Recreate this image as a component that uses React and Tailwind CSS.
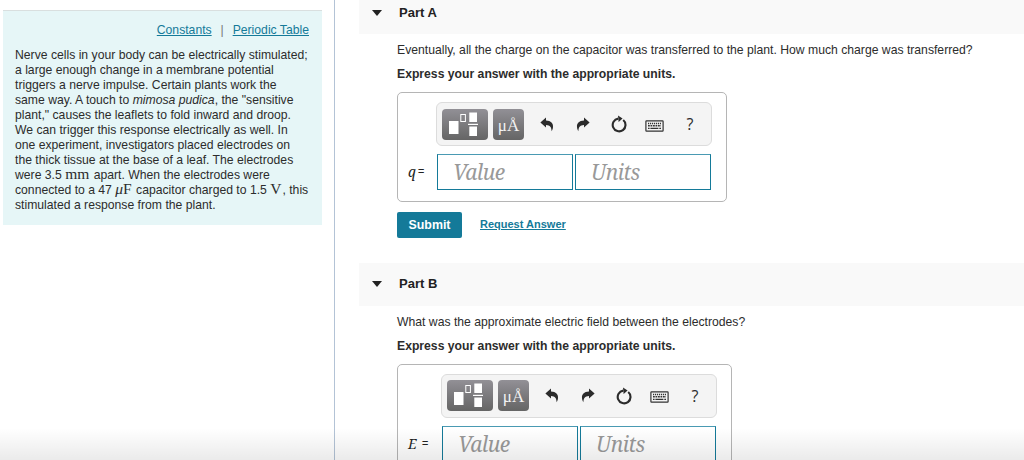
const INTRO_LINES = [
  'Nerve cells in your body can be electrically stimulated;',
  'a large enough change in a membrane potential',
  'triggers a nerve impulse. Certain plants work the',
  <>same way. A touch to <i>mimosa pudica</i>, the "sensitive</>,
  'plant," causes the leaflets to fold inward and droop.',
  'We can trigger this response electrically as well. In',
  'one experiment, investigators placed electrodes on',
  'the thick tissue at the base of a leaf. The electrodes',
  <>were 3.5 <Unit>mm</Unit> apart. When the electrodes were</>,
  <>connected to a 47 <Unit><i>μ</i>F</Unit> capacitor charged to 1.5 <Unit>V</Unit>, this</>,
  'stimulated a response from the plant.'
]

function Unit({ children }) {
  return <span className="mr-[1px] font-['Liberation_Serif',serif] text-[15.5px] leading-[0]">{children}</span>
}

function Sidebar() {
  return (
    <aside className="w-[335px] shrink-0 border-r border-[#b3c3d6] pl-[3px] pt-[10px]">
      <div className="h-[215px] w-[319px] border-t border-[#d9dfdf] bg-[#e6f6f7] pl-3 pt-[12px]">
        <div className="flex h-[15px] w-[294px] justify-end text-[12.2px] leading-[15px] text-[#147a99]">
          <a href="#" className="underline">Constants</a>
          <span className="w-[21px] text-center text-[#777]">|</span>
          <a href="#" className="underline">Periodic Table</a>
        </div>
        <div className="mt-[10px] text-[12.2px] leading-[15px] text-[#2c2c2c]">
          {INTRO_LINES.map((line, i) => (
            <p key={i} className="h-[15px] whitespace-nowrap">{line}</p>
          ))}
        </div>
      </div>
    </aside>
  )
}

function TemplateIcon() {
  return (
    <svg width="46" height="31" viewBox="0 0 46 31" fill="#fff">
      <rect x="7" y="12" width="9.5" height="13" />
      <rect x="18.8" y="5.5" width="4.6" height="7" fill="none" stroke="#fff" strokeWidth="1" />
      <rect x="27.3" y="3.5" width="7.7" height="9.5" />
      <rect x="26" y="14.8" width="10" height="1.2" />
      <rect x="27.3" y="17.5" width="7.7" height="9.5" />
    </svg>
  )
}

function UndoIcon() {
  return (
    <svg width="14" height="15" viewBox="0 0 14 15" fill="#2b2b2b">
      <path d="M0.4 5.4 L6 0.6 V3.4 C11 3.6 13.4 6.2 13 10 C12.9 11.7 12.4 13 11.6 14.2 C11.5 10.3 10.2 8 6 7.9 V10.6 Z" />
    </svg>
  )
}

function RefreshIcon() {
  return (
    <svg width="18" height="18" viewBox="0 0 18 18">
      <path d="M13.2 5 A6.4 6.4 0 1 1 8.2 3.6" fill="none" stroke="#2b2b2b" strokeWidth="2.1" />
      <path d="M8 0.6 L12.6 3.6 L8.6 7 Z" fill="#2b2b2b" />
    </svg>
  )
}

function KeyboardIcon() {
  return (
    <svg width="19" height="12" viewBox="0 0 19 12" fill="none" stroke="#333">
      <rect x="0.9" y="0.9" width="17.2" height="10.2" rx="0.6" strokeWidth="1.2" />
      <path d="M3 3.5 H16" strokeWidth="1.4" strokeDasharray="1.2 0.8" />
      <path d="M3 5.8 H16" strokeWidth="1.4" strokeDasharray="1.8 0.7" />
      <path d="M3 8.4 H4.6 M5.4 8.4 H13.4 M14.3 8.4 H16" strokeWidth="1.4" />
    </svg>
  )
}

function Toolbar() {
  return (
    <div className="flex h-[44px] w-[276px] items-center rounded-[6px] border border-[#dcdcdc] bg-[#f4f4f4] pl-[5px]">
      <button className="h-[31px] w-[46px] rounded-[4px] bg-linear-to-b from-[#929096] to-[#656565]">
        <TemplateIcon />
      </button>
      <button className="ml-[5px] h-[31px] w-[31px] rounded-[4px] bg-linear-to-b from-[#929096] to-[#656565] pt-[2px] font-['Liberation_Serif',serif] text-[17px] leading-[27px] text-[#f2f2f2]">
        μÅ
      </button>
      <button className="ml-[5px] flex w-[36px] justify-center"><UndoIcon /></button>
      <button className="flex w-[36px] -scale-x-100 justify-center"><UndoIcon /></button>
      <button className="flex w-[35px] justify-center"><RefreshIcon /></button>
      <button className="flex w-[36px] justify-center pt-[3px]"><KeyboardIcon /></button>
      <button className="w-[36px] text-center font-['Open_Sans',sans-serif] text-[16px] leading-[20px] text-[#2b2b2b]">?</button>
    </div>
  )
}

function Field({ placeholder }) {
  return (
    <div className="h-[36px] w-[136px] border border-t-[#4a9ab3] border-[#147a99] bg-white pl-[15px] font-['Noto_Serif','Liberation_Serif',serif] text-[21px] leading-[35px] tracking-[-0.6px] text-[#999] italic">
      {placeholder}
    </div>
  )
}

function AnswerBox({ symbol, wide }) {
  return (
    <div className={`mt-[10px] h-[110px] rounded-[5px] border border-[#b5b5b5] pt-[9px] ${wide ? 'w-[335px]' : 'w-[330px]'}`}>
      <div className={wide ? 'pl-[43px]' : 'pl-[38px]'}>
        <Toolbar />
      </div>
      <div className="mt-[8px] flex items-center gap-[2px]">
        <div className={`flex items-center pl-[10px] font-['Noto_Serif','DejaVu_Serif',serif] text-[14px] whitespace-nowrap text-[#222] ${wide ? 'w-[42px] gap-[5px]' : 'w-[37px] gap-[2px]'}`}>
          <i>{symbol}</i><span className="text-[12px] font-bold">=</span>
        </div>
        <Field placeholder="Value" />
        <Field placeholder="Units" />
      </div>
    </div>
  )
}

function Part({ title, question, symbol, wide }) {
  return (
    <section className="h-[271.5px]">
      <header className="flex h-[43px] items-center bg-[#f9f9f9] pl-[13px] text-[13px] font-bold text-[#222]">
        <svg width="10" height="6" viewBox="0 0 10 6" fill="#222">
          <path d="M0 0 H10 L5 6 Z" />
        </svg>
        <h2 className="ml-[17px]">{title}</h2>
      </header>
      <div className="pl-[38px] pt-[8px] text-[12.19px] leading-[16px] whitespace-nowrap text-[#2c2c2c]">
        <p>{question}</p>
        <p className="mt-[8px] font-bold">Express your answer with the appropriate units.</p>
        <AnswerBox symbol={symbol} wide={wide} />
        <div className="mt-[10px] flex h-[26px] items-center">
          <button className="h-[26px] w-[65px] rounded-[2px] bg-[#147a99] text-[12.4px] font-bold text-white">Submit</button>
          <a href="#" className="ml-[18px] -mt-[2px] text-[11px] font-bold text-[#147a99] underline">Request Answer</a>
        </div>
      </div>
    </section>
  )
}

export default function App() {
  return (
    <div className="relative flex h-[460px] w-[1024px] overflow-hidden bg-white font-['Liberation_Sans',Arial,sans-serif]">
      <Sidebar />
      <main className="-mt-[9px] ml-[24px] flex-1">
        <Part
          title="Part A"
          question="Eventually, all the charge on the capacitor was transferred to the plant. How much charge was transferred?"
          symbol="q"
        />
        <Part
          title="Part B"
          question="What was the approximate electric field between the electrodes?"
          symbol="E"
          wide
        />
      </main>
      <div className="pointer-events-none absolute inset-x-0 bottom-0 h-[32px] bg-linear-to-b from-black/0 to-black/8" />
    </div>
  )
}
